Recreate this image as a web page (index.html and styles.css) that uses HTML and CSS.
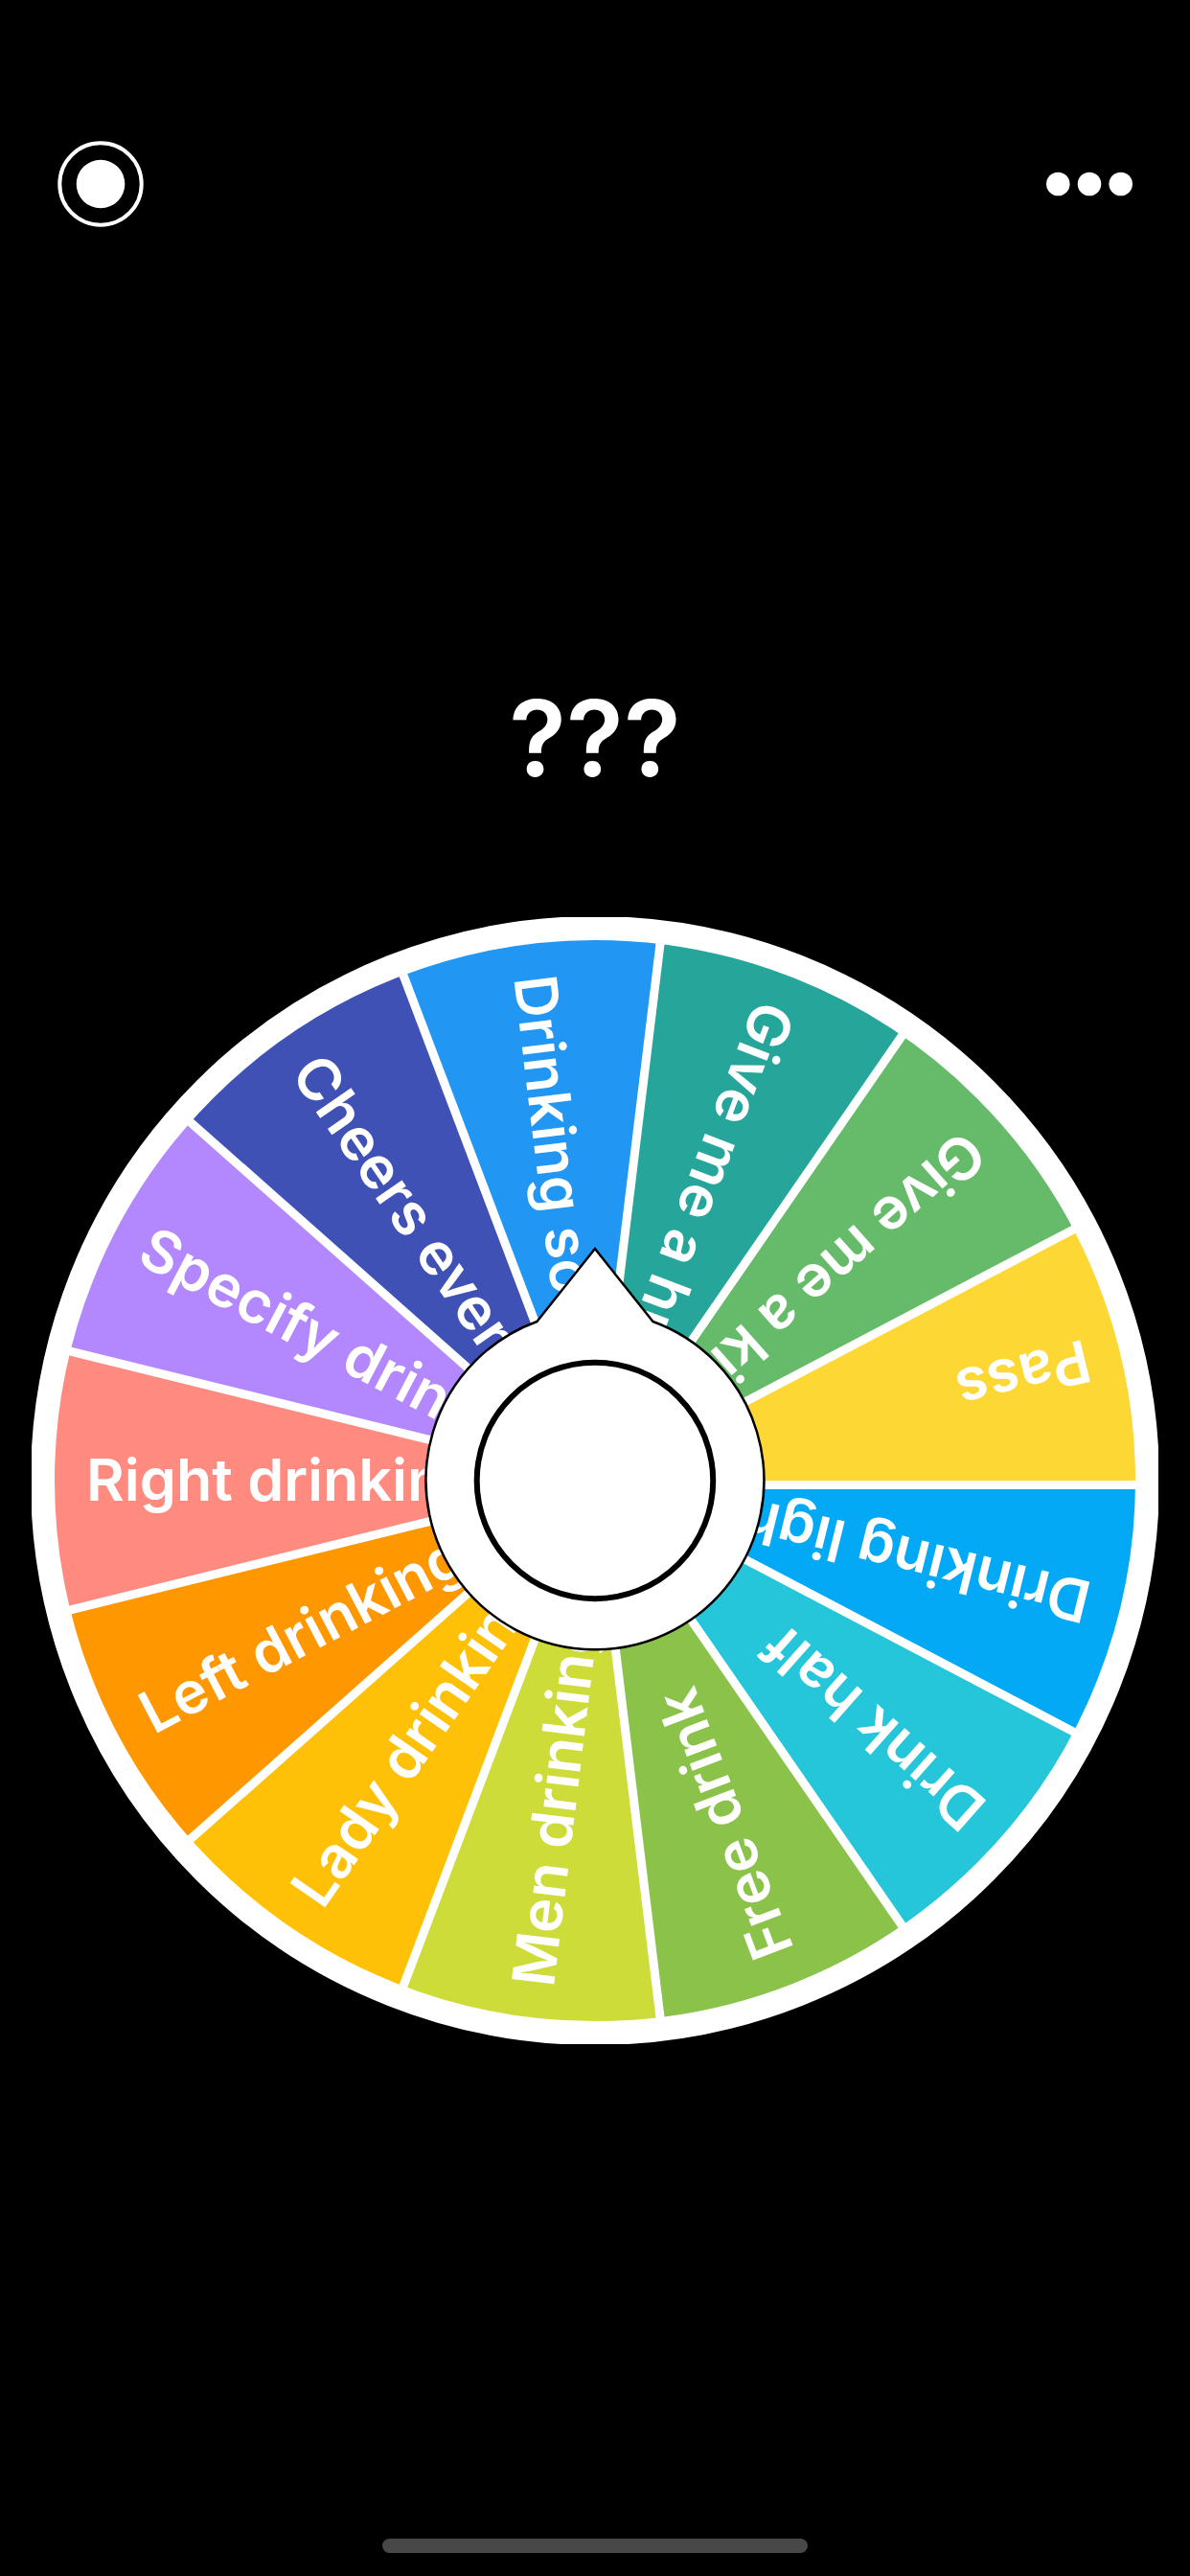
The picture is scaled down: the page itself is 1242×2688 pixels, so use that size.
FILE: index.html
```html
<!DOCTYPE html>
<html lang="en">
<head>
<meta charset="utf-8">
<meta name="viewport" content="width=device-width, initial-scale=1">
<title>Drinking roulette</title>
<link rel="stylesheet" href="styles.css">
</head>
<body>
<header class="topbar">
  <button class="icon-button" type="button" aria-label="Theme">
    <svg class="icon-record" viewBox="0 0 90 90" aria-hidden="true">
      <circle cx="45" cy="45" r="42.7" fill="none" stroke="#fff" stroke-width="4"/>
      <circle cx="45" cy="45" r="25.3" fill="#fff"/>
    </svg>
  </button>
  <button class="icon-button" type="button" aria-label="More options">
    <svg class="icon-more" viewBox="0 0 90 26" aria-hidden="true">
      <g fill="#fff"><circle cx="12.3" cy="13" r="12.3"/><circle cx="45" cy="13" r="12.3"/><circle cx="77.7" cy="13" r="12.3"/></g>
    </svg>
  </button>
</header>
<main class="game">
  <h1 class="result">???</h1>
  <div class="wheel">
    <svg class="wheel-face" viewBox="-588 -588 1176 1176" role="img" aria-label="Wheel with 13 options">
      <defs>
        <path id="slice" d="M0 0L-553.4 -136.4A570 570 0 0 0 -553.4 136.4Z"/>
        <path id="gap" d="M0 0H570"/>
      </defs>
      <g>
        <use href="#slice" fill="#ff8a80"/>
        <use href="#slice" fill="#b388ff" transform="rotate(27.692)"/>
        <use href="#slice" fill="#3f51b5" transform="rotate(55.385)"/>
        <use href="#slice" fill="#2196f3" transform="rotate(83.077)"/>
        <use href="#slice" fill="#26a69a" transform="rotate(110.769)"/>
        <use href="#slice" fill="#66bb6a" transform="rotate(138.462)"/>
        <use href="#slice" fill="#fdd835" transform="rotate(166.154)"/>
        <use href="#slice" fill="#03a9f4" transform="rotate(193.846)"/>
        <use href="#slice" fill="#26c6da" transform="rotate(221.538)"/>
        <use href="#slice" fill="#8bc34a" transform="rotate(249.231)"/>
        <use href="#slice" fill="#cddc39" transform="rotate(276.923)"/>
        <use href="#slice" fill="#ffc107" transform="rotate(304.615)"/>
        <use href="#slice" fill="#ff9800" transform="rotate(332.308)"/>
      </g>
      <g stroke="#fff" stroke-width="9">
        <path d="M0 4.5H570"/>
        <use href="#gap" transform="rotate(27.692)"/>
        <use href="#gap" transform="rotate(55.385)"/>
        <use href="#gap" transform="rotate(83.077)"/>
        <use href="#gap" transform="rotate(110.769)"/>
        <use href="#gap" transform="rotate(138.462)"/>
        <use href="#gap" transform="rotate(166.154)"/>
        <use href="#gap" transform="rotate(193.846)"/>
        <use href="#gap" transform="rotate(221.538)"/>
        <use href="#gap" transform="rotate(249.231)"/>
        <use href="#gap" transform="rotate(276.923)"/>
        <use href="#gap" transform="rotate(304.615)"/>
        <use href="#gap" transform="rotate(332.308)"/>
      </g>
      <circle r="576.5" fill="none" stroke="#fff" stroke-width="25"/>
      <g class="labels">
        <text x="-531" y="21">Right drinking</text>
        <text x="-531" y="21" transform="rotate(27.692)">Specify drinker</text>
        <text x="-531" y="21" transform="rotate(55.385)">Cheers everyone</text>
        <text x="-531" y="21" transform="rotate(83.077)">Drinking some</text>
        <text x="-531" y="21" transform="rotate(110.769)">Give me a hug</text>
        <text x="-531" y="21" transform="rotate(138.462)">Give me a kiss</text>
        <text x="-531" y="21" transform="rotate(166.154)">Pass</text>
        <text x="-531" y="21" transform="rotate(193.846)">Drinking light</text>
        <text x="-531" y="21" transform="rotate(221.538)">Drink half</text>
        <text x="-531" y="21" transform="rotate(249.231)">Free drink</text>
        <text x="-531" y="21" transform="rotate(276.923)">Men drinking</text>
        <text x="-531" y="21" transform="rotate(304.615)">Lady drinking</text>
        <text x="-531" y="21" transform="rotate(332.308)">Left drinking</text>
      </g>
    </svg>
    <button class="spin" type="button" aria-label="Spin">
      <svg class="spin-shape" viewBox="-247 -247 494 494" aria-hidden="true">
        <path d="M0 -242L60.500 -166A176.500 176.500 0 1 1 -60.500 -166Z" fill="#fff" stroke="#000" stroke-width="2.500"/>
        <circle r="123.300" fill="#fff" stroke="#000" stroke-width="6"/>
      </svg>
    </button>
  </div>
</main>
<footer class="home-area"><div class="home-indicator"></div></footer>
</body>
</html>
```
FILE: styles.css
```css
* {
  box-sizing: border-box;
}

body {
  display: flex;
  flex-direction: column;
  min-height: 100vh;
  margin: 0;
  background: #000;
  color: #fff;
  font-family: Inter, "Liberation Sans", sans-serif;
}

button {
  padding: 0;
  border: 0;
  background: none;
  cursor: pointer;
}

.topbar {
  display: flex;
  align-items: center;
  justify-content: space-between;
  padding: 147px 60px 0;
}

.icon-button {
  display: flex;
  align-items: center;
  height: 90px;
}

.icon-record {
  width: 90px;
  height: 90px;
}

.icon-more {
  width: 90px;
  height: 26px;
}

.game {
  padding: 469px 33px 64px;
}

.result {
  margin: 0 0 123px;
  font-size: 110px;
  font-weight: 600;
  line-height: 128px;
  text-align: center;
}

.wheel {
  display: grid;
  place-items: center;
}

.wheel-face,
.spin {
  grid-area: 1 / 1;
}

.wheel-face {
  display: block;
  width: 100%;
}

.labels {
  fill: #fff;
  font-size: 61px;
  font-weight: 600;
}

.spin {
  width: 42%;
}

.spin-shape {
  display: block;
  width: 100%;
}

.home-area {
  display: flex;
  justify-content: center;
  margin-top: auto;
  padding-bottom: 24px;
}

.home-indicator {
  width: 444px;
  height: 15px;
  border-radius: 8px;
  background: #484848;
}
```
